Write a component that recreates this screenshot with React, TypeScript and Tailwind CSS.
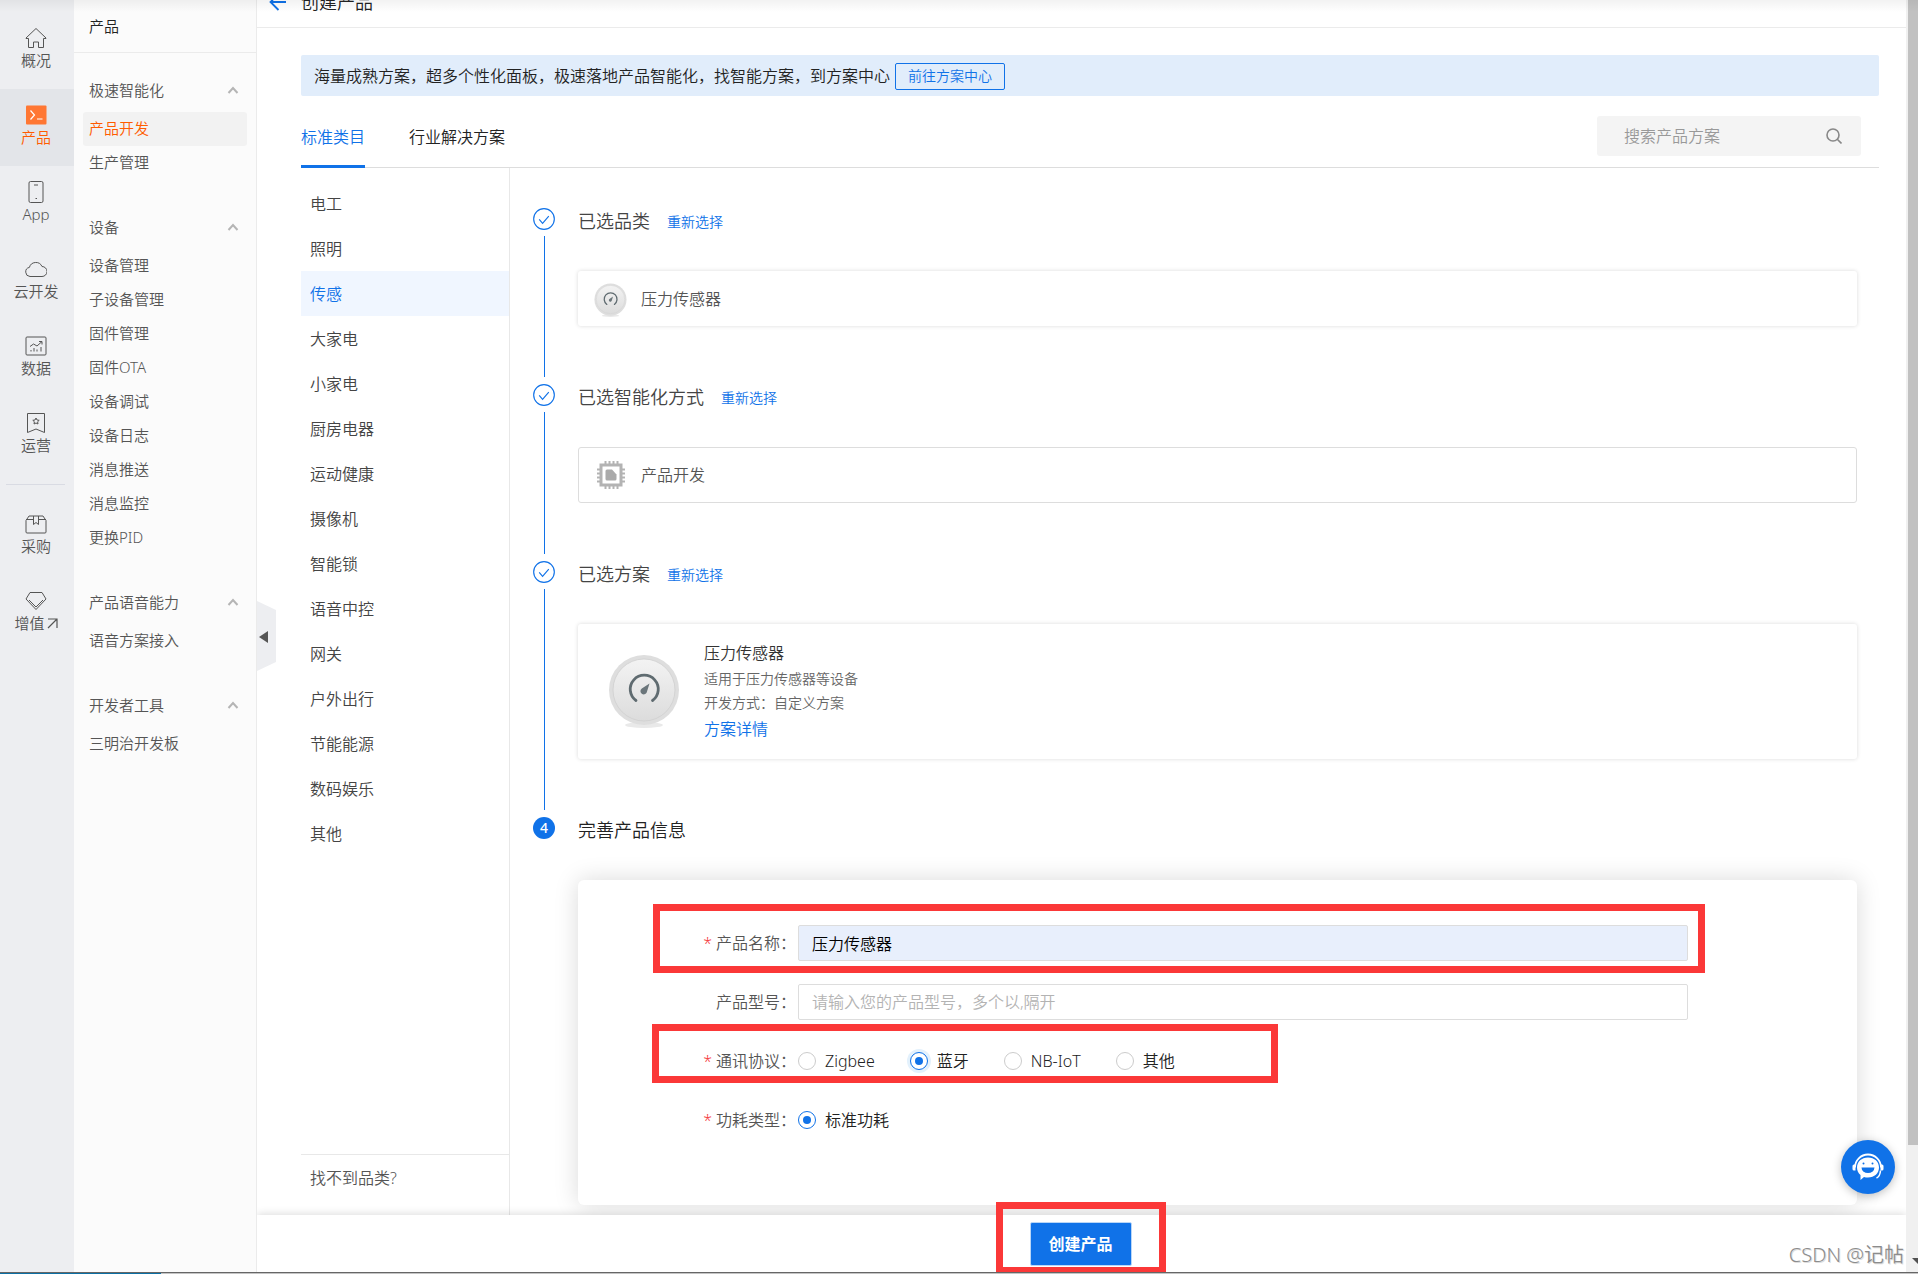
import React from 'react';

interface NavEntry {
  label: string;
  icon: React.ReactNode;
  active?: boolean;
}

interface MenuGroup {
  title: string;
  items: string[];
}

interface IconProps {
  children: React.ReactNode;
}

const NavIcon: React.FC<IconProps> = ({ children }) => (
  <svg
    width="22"
    height="22"
    viewBox="0 0 22 22"
    fill="none"
    stroke="currentColor"
    strokeWidth="1"
    aria-hidden="true"
  >
    {children}
  </svg>
);

const HomeIcon = () => (
  <NavIcon>
    <path d="M1 11 11 1.5 21 11v.5h-2.500V20.500h-5v-5.500h-5v5.500H3.500v-9H1z" strokeLinejoin="round" />
  </NavIcon>
);

const ProductIcon = () => (
  <NavIcon>
    <rect x="1" y="1.500" width="20.500" height="19" rx="1" fill="#ff7733" stroke="none" />
    <path d="m5.500 6.500 4 4.500-4 4.500M12 15h5.500" stroke="#fff" strokeWidth="1.200" />
  </NavIcon>
);

const PhoneIcon = () => (
  <NavIcon>
    <rect x="4" y=".5" width="14" height="21" rx="1.500" />
    <path d="M9 4h4M10.500 17.500h1.500" />
  </NavIcon>
);

const CloudIcon = () => (
  <NavIcon>
    <path d="M5 18.500a4.600 4.600 0 0 1-.6-9.100A6.700 6.700 0 0 1 17 8.500a5 5 0 0 1 0 10z" />
  </NavIcon>
);

const DataIcon = () => (
  <NavIcon>
    <rect x="1" y="2" width="20" height="18" rx="1" />
    <path d="m5 11.500 3.500-2.500 3.500 2 5-4.500M14 6.500h3v3" />
    <path d="M6 16.500v-1.500M9 16.500V13M12 16.500v-2M16 16.500V12" />
  </NavIcon>
);

const OperateIcon = () => (
  <NavIcon>
    <path d="M2.500 1.500h17v19L11 17l-8.500 3.500z" />
    <path d="m11 6 1 2 2.200.3-1.600 1.500.4 2.200-2-1-2 1 .4-2.200-1.600-1.500L10 8z" />
  </NavIcon>
);

const BoxIcon = () => (
  <NavIcon>
    <path d="M1 7.500v11.500a1 1 0 0 0 1 1h18a1 1 0 0 0 1-1V7.500l-3-4.500H4z" />
    <path d="M1 6.500h7.500M13.500 6.500H21M8.500 3v8.500L11 9.500l2.500 2V3" />
  </NavIcon>
);

const DiamondIcon = () => (
  <NavIcon>
    <path d="M5 2.500h12l4 6.500-10 10.500L1 9z" strokeLinejoin="round" />
    <path d="m4 10 7 7 7-7" />
  </NavIcon>
);

const GaugeKnob = ({ id, className }: { id: string; className: string }) => (
  <svg className={className} viewBox="0 0 72 76" fill="none" aria-hidden="true">
    <defs>
      <linearGradient id={id} x1="0" y1="0" x2="0" y2="1">
        <stop offset="0" stopColor="#f3f3f3" />
        <stop offset="1" stopColor="#dcdcdc" />
      </linearGradient>
    </defs>
    <ellipse cx="36" cy="71" rx="19" ry="3" fill="#e9e9e9" />
    <circle cx="36" cy="36" r="35" fill="#dedede" />
    <circle cx="36" cy="36" r="31" fill={`url(#${id})`} stroke="#cfcfcf" strokeWidth=".8" />
    <path
      d="M28 46.500a14 14 0 1 1 16.500 0"
      stroke="#5f6b70"
      strokeWidth="2.800"
      strokeLinecap="round"
    />
    <path d="M41.500 29.500 39 37.500a3.300 3.300 0 1 1-5.200-3z" fill="#6b767b" />
  </svg>
);

const ChipIcon = () => (
  <svg className="h-7 w-7 shrink-0" viewBox="0 0 28 28" fill="none" aria-hidden="true">
    <path
      d="M8.500 0v4M12.500 0v4M16.500 0v4M20.500 0v4M8.500 24v4M12.500 24v4M16.500 24v4M20.500 24v4M0 8.500h4M0 12.500h4M0 16.500h4M0 20.500h4M24 8.500h4M24 12.500h4M24 16.500h4M24 20.500h4"
      stroke="#b3b3b3"
      strokeWidth="2"
    />
    <rect x="4" y="4" width="20" height="20" stroke="#b3b3b3" strokeWidth="3" />
    <path d="M8.500 10a1.500 1.500 0 0 1 1.500-1.500h5l4.500 5V18a1.500 1.500 0 0 1-1.500 1.500h-8A1.500 1.500 0 0 1 8.500 18z" fill="#aaa" />
  </svg>
);

const ServiceIcon = () => (
  <svg width="34" height="30" viewBox="0 0 34 30" fill="none" aria-hidden="true">
    <path d="M4 15.500a13 13 0 0 1 26 0" stroke="#fff" strokeWidth="1.800" />
    <path d="M4.500 12.500h-1.500a1.500 1.500 0 0 0-1.500 1.500v3a1.500 1.500 0 0 0 1.500 1.500h1.500zM29.500 12.500H31a1.500 1.500 0 0 1 1.500 1.500v3a1.500 1.500 0 0 1-1.500 1.500h-1.500z" fill="#fff" />
    <path d="M29.500 18.500c-.3 4-1.500 6.500-4 7.500" stroke="#fff" strokeWidth="1.500" />
    <path d="M17 5.500c6.500 0 11 4.200 11 10s-4.500 10-11 10c-1.500 0-2.800-.2-4-.6L9.500 28v-5C7.300 21 6 18.500 6 15.500c0-5.800 4.500-10 11-10z" fill="#fff" />
    <path d="M10.500 15.500h13a6.500 5.500 0 0 1-13 0z" fill="#1072e8" />
    <circle cx="12.500" cy="11.500" r="1" fill="#1072e8" />
    <circle cx="21.500" cy="11.500" r="1" fill="#1072e8" />
  </svg>
);

const navTop: NavEntry[] = [
  { label: '概况', icon: <HomeIcon /> },
  { label: '产品', icon: <ProductIcon />, active: true },
  { label: 'App', icon: <PhoneIcon /> },
  { label: '云开发', icon: <CloudIcon /> },
  { label: '数据', icon: <DataIcon /> },
  { label: '运营', icon: <OperateIcon /> },
];

const menu: MenuGroup[] = [
  { title: '极速智能化', items: ['产品开发', '生产管理'] },
  {
    title: '设备',
    items: [
      '设备管理',
      '子设备管理',
      '固件管理',
      '固件OTA',
      '设备调试',
      '设备日志',
      '消息推送',
      '消息监控',
      '更换PID',
    ],
  },
  { title: '产品语音能力', items: ['语音方案接入'] },
  { title: '开发者工具', items: ['三明治开发板'] },
];

const categories = [
  '电工',
  '照明',
  '传感',
  '大家电',
  '小家电',
  '厨房电器',
  '运动健康',
  '摄像机',
  '智能锁',
  '语音中控',
  '网关',
  '户外出行',
  '节能能源',
  '数码娱乐',
  '其他',
];

const protocols = ['Zigbee', '蓝牙', 'NB-IoT', '其他'];

const NavLink = ({ label, icon, active }: NavEntry) => (
  <a
    href="#"
    className={`flex h-[77px] flex-col items-center pt-[15px] pr-[2px] text-[15px] leading-5 ${
      active ? 'bg-[#e3e5e9] text-[#ff5c00]' : 'text-[#555]'
    }`}
  >
    {icon}
    <span className="mt-px flex items-center">{label}</span>
  </a>
);

const NavRail = () => (
  <nav className="w-[74px] shrink-0 bg-[#edeef1] pt-3">
    {navTop.map((entry) => (
      <NavLink key={entry.label} {...entry} />
    ))}
    <hr className="mt-[10px] mr-[9px] mb-[13px] ml-[6px] border-[#d9dbe3]" />
    <NavLink label="采购" icon={<BoxIcon />} />
    <a
      href="#"
      className="flex h-[77px] flex-col items-center pt-[15px] pr-[2px] text-[15px] leading-5 text-[#555]"
    >
      <DiamondIcon />
      <span className="mt-px flex items-center gap-[2px]">
        增值
        <svg width="11" height="11" viewBox="0 0 11 11" fill="none" stroke="currentColor" aria-hidden="true">
          <path d="M1 1h9v9M10 1 1 10" strokeWidth="1.200" />
        </svg>
      </span>
    </a>
  </nav>
);

const SideMenu = () => (
  <aside className="relative w-[183px] shrink-0 border-r border-[#ebebeb] bg-[#fbfbfb] text-[15px] text-[#555]">
    <h2 className="h-[53px] border-b border-[#ebebeb] pl-[15px] leading-[52px] text-[#222]">产品</h2>
    <div className="pt-[23px]">
      {menu.map((group) => (
        <section key={group.title} className="mb-[33px]">
          <button type="button" className="flex h-7 w-full items-center justify-between pr-[17px] pl-[15px]">
            {group.title}
            <svg width="12" height="8" viewBox="0 0 12 8" fill="none" aria-hidden="true">
              <path d="m1.500 7 4.500-5 4.500 5" stroke="#b5b5b5" strokeWidth="2" />
            </svg>
          </button>
          <ul className="mx-[9px] mt-2">
            {group.items.map((item) => (
              <li key={item}>
                <a
                  href="#"
                  className={`block h-[34px] rounded-[3px] pl-[6px] leading-[33px] ${
                    item === '产品开发' ? 'bg-[#f2f2f2] text-[#ff5c00]' : ''
                  }`}
                >
                  {item}
                </a>
              </li>
            ))}
          </ul>
        </section>
      ))}
    </div>
    <button type="button" aria-label="收起" className="absolute top-[601px] -right-5 z-10">
      <svg width="19" height="70" viewBox="0 0 19 70" aria-hidden="true">
        <path d="M0 0 19 9v52L0 70z" fill="#edeef1" />
        <path d="M11 30v12l-9-6z" fill="#555" />
      </svg>
    </button>
  </aside>
);

interface StepProps {
  title: string;
  current?: boolean;
  children: React.ReactNode;
}

const Step: React.FC<StepProps> = ({ title, current, children }) => (
  <li className="flex gap-[23px]">
    <div className="flex w-[22px] shrink-0 flex-col items-center">
      {current ? (
        <span className="flex size-[22px] items-center justify-center rounded-full bg-[#1072e8] text-sm font-medium text-white">
          4
        </span>
      ) : (
        <>
          <svg width="22" height="22" viewBox="0 0 23 23" fill="none" stroke="#1072e8" aria-hidden="true">
            <circle cx="11.500" cy="11.500" r="10.800" strokeWidth="1.200" />
            <path d="m6.500 12 3.500 4 6.500-7.500" strokeWidth="1.200" />
          </svg>
          <span className="mt-[6px] mb-[7px] w-px flex-1 bg-[#1072e8]" />
        </>
      )}
    </div>
    <div className={`min-w-0 flex-1 ${current ? '' : 'pb-[58px]'}`}>
      <h3 className={`flex items-center gap-[17px] text-lg leading-[26px] ${current ? 'text-[#222]' : 'text-[#444]'}`}>
        {title}
        {!current && (
          <a href="#" className="pt-[2px] text-sm text-[#1072e8]">
            重新选择
          </a>
        )}
      </h3>
      <div className="mt-[37px]">{children}</div>
    </div>
  </li>
);

interface FieldProps {
  label: string;
  required?: boolean;
  htmlFor?: string;
  children: React.ReactNode;
}

const Field: React.FC<FieldProps> = ({ label, required, htmlFor, children }) => {
  const Label = htmlFor ? 'label' : 'span';
  return (
    <div className="relative flex h-9 items-center">
      <Label htmlFor={htmlFor} className="w-[220px] shrink-0 pr-[2px] text-right text-[#555]">
        {required && <span className="mr-1 text-base text-[#f5393c]">*</span>}
        {label}：
      </Label>
      {children}
    </div>
  );
};

const Radio = ({ name, label, checked, focused }: { name: string; label: string; checked: boolean; focused?: boolean }) => (
  <label className="mr-[35px] flex items-center gap-[9px] text-[#222]">
    <input
      type="radio"
      name={name}
      defaultChecked={checked}
      className={`size-[18px] appearance-none rounded-full border border-[#ccc] bg-clip-content p-1 checked:border-[#1072e8] checked:bg-[#1072e8] ${
        focused ? 'ring-3 ring-[#e3f1fc]' : ''
      }`}
    />
    {label}
  </label>
);

const ProductForm = () => (
  <form
    id="product-form"
    className="flex flex-col gap-[23px] rounded-md bg-white pt-[45px] pr-[169px] pb-[67px] shadow-[0_0_24px_rgba(0,0,0,0.15)]"
  >
    <Field label="产品名称" required htmlFor="product-name">
      <input
        id="product-name"
        type="text"
        defaultValue="压力传感器"
        className="h-9 min-w-0 flex-1 rounded-[2px] border border-[#ddd] bg-[#e8effc] px-[13px] text-black"
      />
      <span className="pointer-events-none absolute -top-[21px] -right-[17px] -bottom-3 left-[75px] border-[7px] border-[#fb3838]" />
    </Field>
    <Field label="产品型号" htmlFor="product-model">
      <input
        id="product-model"
        type="text"
        placeholder="请输入您的产品型号，多个以,隔开"
        className="h-9 min-w-0 flex-1 rounded-[2px] border border-[#ddd] px-[13px] placeholder:text-[#b3b3b3]"
      />
    </Field>
    <Field label="通讯协议" required>
      {protocols.map((item) => (
        <Radio key={item} name="protocol" label={item} checked={item === '蓝牙'} focused={item === '蓝牙'} />
      ))}
      <span className="pointer-events-none absolute -top-[19px] -bottom-1 left-[74px] w-[626px] border-[7px] border-[#fb3838]" />
    </Field>
    <Field label="功耗类型" required>
      <Radio name="power" label="标准功耗" checked />
    </Field>
  </form>
);

const Steps = () => (
  <ol className="min-w-0 flex-1 pt-10 pr-[22px] pb-[9px] pl-[23px]">
    <Step title="已选品类">
      <div className="flex h-[55px] items-center gap-[14px] rounded-[3px] bg-white pl-4 text-[#555] shadow-[0_0_4px_rgba(0,0,0,0.15)]">
        <GaugeKnob id="knob-small" className="mt-1 h-[35px] w-[33px] shrink-0" />
        压力传感器
      </div>
    </Step>
    <Step title="已选智能化方式">
      <div className="flex h-14 items-center gap-4 rounded-[3px] border border-[#ddd] bg-white pl-[18px] text-[#555]">
        <ChipIcon />
        产品开发
      </div>
    </Step>
    <Step title="已选方案">
      <div className="flex items-center gap-6 rounded-[3px] bg-white py-4 pl-[30px] shadow-[0_0_4px_rgba(0,0,0,0.15)]">
        <GaugeKnob id="knob-large" className="h-[76px] w-[72px] shrink-0" />
        <div>
          <h4 className="leading-[27px] text-[#333]">压力传感器</h4>
          <p className="text-sm leading-6 text-[#666]">适用于压力传感器等设备</p>
          <p className="text-sm leading-6 text-[#666]">开发方式：自定义方案</p>
          <a href="#" className="block leading-7 text-[#1072e8]">
            方案详情
          </a>
        </div>
      </div>
    </Step>
    <Step title="完善产品信息" current>
      <ProductForm />
    </Step>
  </ol>
);

const CategoryList = () => (
  <div className="flex w-[209px] shrink-0 flex-col border-r border-[#e8e8e8] pt-[13px] text-[#444]">
    <ul>
      {categories.map((item) => (
        <li key={item}>
          <a
            href="#"
            className={`block h-[45px] pl-[9px] leading-[47px] ${
              item === '传感' ? 'bg-[#f0f6ff] text-[#1072e8]' : ''
            }`}
          >
            {item}
          </a>
        </li>
      ))}
    </ul>
    <a href="#" className="mt-auto h-[61px] border-t border-[#e8e8e8] pl-[9px] leading-[47px] text-[#555]">
      找不到品类?
    </a>
  </div>
);

const Main = () => (
  <main className="relative flex min-w-0 flex-1 flex-col overflow-hidden bg-white">
    <header className="-mt-6 flex h-[52px] shrink-0 items-center gap-[14px] border-b border-[#ebebeb] pl-3 text-lg text-[#222]">
      <a href="#" aria-label="返回">
        <svg width="18" height="18" viewBox="0 0 18 18" fill="none" stroke="#1072e8" strokeWidth="1.800" aria-hidden="true">
          <path d="M17 9H2M9.500 1 1.500 9l8 8" />
        </svg>
      </a>
      <h1>创建产品</h1>
    </header>

    <div className="flex min-h-0 flex-1 flex-col overflow-hidden pr-[27px] pl-11">
      <div className="mt-[27px] flex h-[41px] shrink-0 items-center gap-[5px] rounded-[2px] bg-[#e1edfb] pl-[13px] text-[#222]">
        <p>海量成熟方案，超多个性化面板，极速落地产品智能化，找智能方案，到方案中心</p>
        <button
          type="button"
          className="mt-px h-[27px] rounded-[2px] border border-[#1072e8] px-3 text-sm text-[#1072e8]"
        >
          前往方案中心
        </button>
      </div>

      <div className="flex h-[72px] shrink-0 justify-between border-b border-[#ddd]">
        <div className="-mb-px flex gap-11">
          <button type="button" className="border-b-3 border-[#1072e8] pt-3 text-[#1072e8]">
            标准类目
          </button>
          <button type="button" className="border-b-3 border-transparent pt-3 text-[#222]">
            行业解决方案
          </button>
        </div>
        <div className="mt-5 mr-[18px] flex h-10 w-[264px] items-center justify-between rounded-[3px] bg-[#f4f4f4] pr-[19px] pl-[27px]">
          <input
            type="text"
            aria-label="搜索产品方案"
            placeholder="搜索产品方案"
            className="min-w-0 flex-1 placeholder:text-[#999]"
          />
          <svg width="16" height="16" viewBox="0 0 16 16" fill="none" stroke="#888" strokeWidth="1.600" aria-hidden="true">
            <circle cx="7" cy="7" r="6" />
            <path d="m11 11 4.500 4.500" />
          </svg>
        </div>
      </div>

      <div className="flex flex-1">
        <CategoryList />
        <Steps />
      </div>
    </div>

    <footer className="relative flex h-[57px] shrink-0 items-center justify-center bg-white pr-[2px] shadow-[0_-1px_8px_rgba(0,0,0,0.14)]">
      <div className="relative">
        <button
          type="submit"
          form="product-form"
          className="h-11 w-[102px] rounded-[2px] border border-[#b9d6f7] bg-[#1072e8] font-bold text-white"
        >
          创建产品
        </button>
        <span className="pointer-events-none absolute -top-5 -right-[34px] -bottom-2 -left-[34px] border-[7px] border-[#fb3838]" />
      </div>
      <span className="absolute right-[2px] bottom-[3px] text-xl text-[#8c8c8c] [text-shadow:1px_1px_0_#ddd]">
        CSDN @记帖
      </span>
    </footer>

    <button
      type="button"
      aria-label="在线客服"
      className="absolute right-[11px] bottom-[78px] flex size-[54px] items-center justify-center rounded-full bg-[#1072e8] shadow-[0_2px_10px_rgba(0,0,0,0.25)]"
    >
      <ServiceIcon />
    </button>
  </main>
);

const ScrollBar = () => (
  <div className="relative w-3 shrink-0 bg-[#f0f0f0] pl-[2px]">
    <div className="h-[90%] bg-[#c1c1c1]" />
    <svg className="absolute right-0 bottom-2" width="6" height="6" viewBox="0 0 6 6" aria-hidden="true">
      <path d="M0 0h6v6z" fill="#505050" />
    </svg>
  </div>
);

const App: React.FC = () => {
  return (
    <div className='relative flex h-screen flex-col overflow-hidden bg-white font-["Noto_Sans","Noto_Sans_CJK_SC",sans-serif] text-base font-[350]'>
      <div className="flex min-h-0 flex-1">
        <NavRail />
        <SideMenu />
        <Main />
        <ScrollBar />
      </div>
      <div className="flex h-[2px] shrink-0 border-t border-[#666]">
        <span className="w-[161px] bg-[#0b6fa4]" />
        <span className="flex-1 bg-[#c4c4c4]" />
      </div>
      <div className="pointer-events-none absolute inset-x-0 top-0 h-3 bg-linear-to-b from-black/5 to-transparent" />
    </div>
  );
};

export default App;
